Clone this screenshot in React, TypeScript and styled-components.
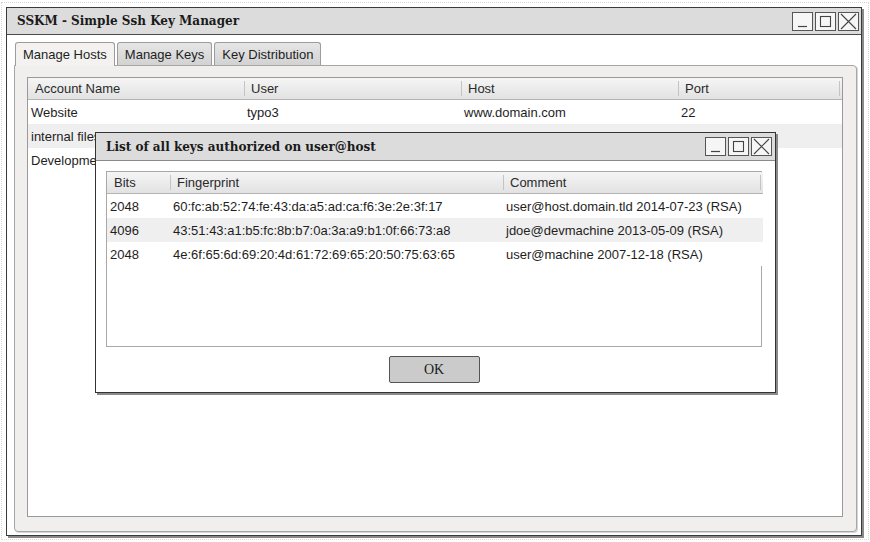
import { Fragment } from 'react';
import styled, { createGlobalStyle } from 'styled-components';

const GlobalStyle = createGlobalStyle`
  html, body {
    margin: 0;
    padding: 0;
    background: #fff;
  }
  body {
    font-family: "Liberation Sans", Arial, sans-serif;
    font-size: 13px;
    color: #1e1e1e;
  }
  * {
    box-sizing: border-box;
  }
`;

const Page = styled.div`
  position: relative;
  width: 870px;
  height: 542px;
  padding: 2px 1px;
`;

const Frame = styled.div`
  height: 538px;
  border: 1px dotted #d6d6d6;
  padding: 4px 0 0 4px;
`;

const Window = styled.div`
  width: 856px;
  height: 529px;
  border: 1px solid #3a3a3a;
  box-shadow: 2px 2px 0 #8a8a8a;
  background: #fff;
  display: flex;
  flex-direction: column;
`;

const TitleBar = styled.div<{ $height: number }>`
  height: ${({ $height }) => $height}px;
  flex: none;
  background: #dcdcdc;
  border-bottom: 1px solid #4a4a4a;
  display: flex;
  align-items: center;
  justify-content: space-between;
  padding: 0 2px 0 10px;
`;

const Title = styled.div`
  font-family: "DejaVu Serif", "Liberation Serif", serif;
  font-weight: bold;
  font-size: 12px;
  color: #1a1a1a;
`;

const WinButtons = styled.div`
  display: flex;
  gap: 2px;
`;

const WinButton = styled.div`
  width: 21px;
  height: 19px;
  border: 1px solid #555;
  background: #f6f6f6;
  display: flex;
  align-items: center;
  justify-content: center;
`;

const Body = styled.div`
  flex: 1;
  display: flex;
  flex-direction: column;
  padding: 7px 4px 3px 7px;
`;

const TabStrip = styled.div`
  display: flex;
  gap: 2px;
  height: 24px;
  margin-left: 1px;
  position: relative;
  z-index: 1;
`;

const Tab = styled.div<{ $active?: boolean }>`
  height: ${({ $active }) => ($active ? 24 : 23)}px;
  padding: 0 7px;
  display: flex;
  align-items: center;
  border: 1px solid #9c9c9c;
  border-bottom: none;
  border-radius: 3px 3px 0 0;
  background: ${({ $active }) =>
    $active ? '#f3f2f0' : 'linear-gradient(#e6e6e6, #d2d2d2)'};
  color: #1e1e1e;
`;

const Panel = styled.div`
  flex: 1;
  margin-top: -1px;
  background: #f0efed;
  border: 1px solid #a6a6a6;
  border-radius: 0 4px 4px 4px;
  box-shadow: 1px 1px 0 #d6d6d6;
  padding: 11px 15px 14px 12px;
  display: flex;
`;

const Table = styled.div<{ $cols: string }>`
  flex: 1;
  background: #fff;
  border: 1px solid #9a9a9a;
  display: grid;
  grid-template-columns: ${({ $cols }) => $cols};
  grid-template-rows: 22px;
  grid-auto-rows: 24px;
  align-content: start;
`;

const HeadCell = styled.div<{ $first?: boolean }>`
  height: 22px;
  display: flex;
  align-items: center;
  padding-left: 7px;
  background: linear-gradient(#f5f5f5, #e2e2e2);
  border-bottom: 1px solid #b4b4b4;
  position: relative;
  color: #2a2a2a;

  &::before {
    content: '';
    display: ${({ $first }) => ($first ? 'none' : 'block')};
    position: absolute;
    left: 0;
    top: 3px;
    bottom: 3px;
    width: 1px;
    background: #c4c4c4;
  }
`;

const HeadEnd = styled(HeadCell)`
  padding: 0;
`;

const Cell = styled.div<{ $alt?: boolean }>`
  display: flex;
  align-items: center;
  padding-left: 3px;
  white-space: nowrap;
  overflow: hidden;
  background: ${({ $alt }) => ($alt ? '#efefef' : '#fff')};
  color: #1e1e1e;
`;

const Dialog = styled.div`
  position: absolute;
  left: 95px;
  top: 132px;
  width: 681px;
  height: 261px;
  background: #fff;
  border: 1px solid #333;
  box-shadow: 2px 2px 0 #8a8a8a;
  display: flex;
  flex-direction: column;
  z-index: 5;
`;

const DialogTitleBar = styled(TitleBar)`
  padding: 0 3px 0 10px;
  border-bottom-color: #8a8a8a;
`;

const DialogBody = styled.div`
  flex: 1;
  display: flex;
  flex-direction: column;
  align-items: center;
  padding: 10px 13px 10px 10px;
  gap: 9px;
`;

const DialogTable = styled(Table)`
  flex: none;
  align-self: stretch;
  height: 176px;
  border-color: #a8a8a8;
`;

const OkButton = styled.button`
  width: 91px;
  height: 27px;
  background: #cbcbcb;
  border: 1px solid #555;
  border-radius: 2px;
  font-family: "Liberation Serif", "Times New Roman", serif;
  font-size: 14px;
  color: #1a1a1a;
  padding: 0;
`;

const MinIcon = () => (
  <svg width="19" height="17" viewBox="0 0 19 17">
    <line x1="5" y1="13.5" x2="14" y2="13.5" stroke="#444" strokeWidth="1.2" />
  </svg>
);

const MaxIcon = () => (
  <svg width="19" height="17" viewBox="0 0 19 17">
    <rect x="4.5" y="3.5" width="10" height="10" fill="none" stroke="#444" strokeWidth="1.1" />
  </svg>
);

const CloseIcon = () => (
  <svg width="19" height="17" viewBox="0 0 19 17">
    <path d="M2 1 L17 16 M17 1 L2 16" stroke="#444" strokeWidth="1.1" fill="none" />
  </svg>
);

const WindowControls = () => (
  <WinButtons>
    <WinButton><MinIcon /></WinButton>
    <WinButton><MaxIcon /></WinButton>
    <WinButton><CloseIcon /></WinButton>
  </WinButtons>
);

const hosts = [
  ['Website', 'typo3', 'www.domain.com', '22'],
  ['internal files', 'web', '192.168.1.37', '22'],
  ['Development', 'dev', 'dev.domain.com', '2222'],
];

const keys = [
  ['2048', '60:fc:ab:52:74:fe:43:da:a5:ad:ca:f6:3e:2e:3f:17', 'user@host.domain.tld 2014-07-23 (RSA)'],
  ['4096', '43:51:43:a1:b5:fc:8b:b7:0a:3a:a9:b1:0f:66:73:a8', 'jdoe@devmachine 2013-05-09 (RSA)'],
  ['2048', '4e:6f:65:6d:69:20:4d:61:72:69:65:20:50:75:63:65', 'user@machine 2007-12-18 (RSA)'],
];

export default function App() {
  return (
    <Page>
      <GlobalStyle />
      <Frame>
        <Window>
          <TitleBar $height={27}>
            <Title>SSKM - Simple Ssh Key Manager</Title>
            <WindowControls />
          </TitleBar>
          <Body>
            <TabStrip>
              <Tab $active>Manage Hosts</Tab>
              <Tab>Manage Keys</Tab>
              <Tab>Key Distribution</Tab>
            </TabStrip>
            <Panel>
              <Table $cols="216px 217px 217px 161px 1fr">
                <HeadCell $first>Account Name</HeadCell>
                <HeadCell>User</HeadCell>
                <HeadCell>Host</HeadCell>
                <HeadCell>Port</HeadCell>
                <HeadEnd />
                {hosts.map((row, i) => (
                  <Fragment key={i}>
                    {row.map((v, j) => (
                      <Cell key={j} $alt={i === 1}>{v}</Cell>
                    ))}
                    <Cell $alt={i === 1} />
                  </Fragment>
                ))}
              </Table>
            </Panel>
          </Body>
        </Window>
      </Frame>

      <Dialog>
        <DialogTitleBar $height={28}>
          <Title>List of all keys authorized on user@host</Title>
          <WindowControls />
        </DialogTitleBar>
        <DialogBody>
          <DialogTable $cols="63px 333px 257px 1fr">
            <HeadCell $first>Bits</HeadCell>
            <HeadCell>Fingerprint</HeadCell>
            <HeadCell>Comment</HeadCell>
            <HeadEnd />
            {keys.map((row, i) => (
              <Fragment key={i}>
                {row.map((v, j) => (
                  <Cell key={j} $alt={i === 1}>{v}</Cell>
                ))}
                <Cell $alt={i === 1} />
              </Fragment>
            ))}
          </DialogTable>
          <OkButton>OK</OkButton>
        </DialogBody>
      </Dialog>
    </Page>
  );
}
